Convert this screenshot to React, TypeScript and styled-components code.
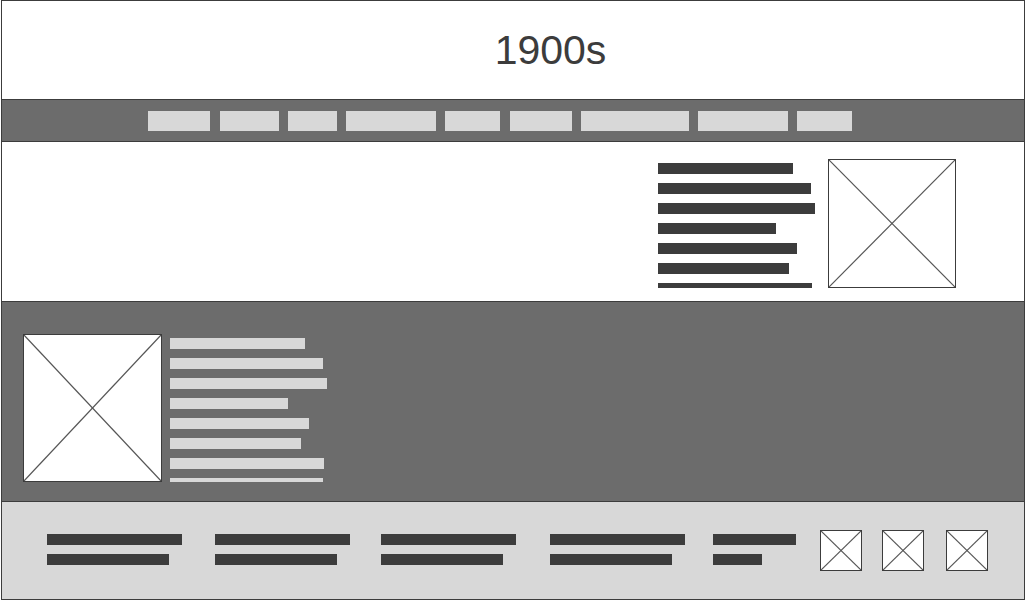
import React from "react";
import styled, { createGlobalStyle } from "styled-components";

const GlobalStyle = createGlobalStyle`
  html, body { margin: 0; padding: 0; background: #ffffff; }
  body { font-family: "Liberation Sans", Arial, sans-serif; }
  * { box-sizing: border-box; }
`;

const DARK = "#3c3c3c";
const MID = "#6c6c6c";
const LIGHT = "#d8d8d8";

const Page = styled.div`
  margin-left: 1px;
  width: 1024px;
  height: 600px;
  border: 1px solid ${DARK};
  display: flex;
  flex-direction: column;
  overflow: hidden;
`;

const Header = styled.header`
  height: 99px;
  border-bottom: 1px solid ${DARK};
  display: flex;
  align-items: center;
  justify-content: center;
  padding-left: 75px;
  padding-top: 1px;
  background: #ffffff;
`;

const Title = styled.h1`
  margin: 0;
  font-family: "Liberation Sans", Arial, sans-serif;
  font-weight: 400;
  font-size: 41px;
  color: ${DARK};
`;

const Nav = styled.nav`
  height: 42px;
  border-bottom: 1px solid ${DARK};
  background: ${MID};
  display: flex;
  align-items: flex-start;
  padding: 11px 0 0 146px;
`;

const NavItem = styled.div<{ $w: number; $ml: number }>`
  width: ${(p) => p.$w}px;
  height: 20px;
  margin-left: ${(p) => p.$ml}px;
  background: ${LIGHT};
  flex: none;
`;

const Hero = styled.section`
  height: 160px;
  border-bottom: 1px solid ${DARK};
  background: #ffffff;
  display: flex;
  align-items: flex-start;
  padding: 17px 0 0 656px;
  gap: 13px;
`;

const Feature = styled.section`
  height: 200px;
  border-bottom: 1px solid ${DARK};
  background: ${MID};
  display: flex;
  align-items: flex-start;
  padding: 32px 0 0 21px;
  gap: 8px;
`;

const TextBlock = styled.div<{ $h: number }>`
  width: 157px;
  height: ${(p) => p.$h}px;
  overflow: hidden;
  display: flex;
  flex-direction: column;
  flex: none;
`;

const Row = styled.div`
  height: 20px;
  padding-top: 4px;
  flex: none;
`;

const Bar = styled.div<{ $w: number; $c: string }>`
  width: ${(p) => p.$w}px;
  height: 11px;
  background: ${(p) => p.$c};
`;

const Frame = styled.div<{ $w: number; $h: number }>`
  width: ${(p) => p.$w}px;
  height: ${(p) => p.$h}px;
  border: 1px solid ${DARK};
  background: #ffffff;
  flex: none;
  display: block;
  svg { display: block; width: 100%; height: 100%; }
`;

const Footer = styled.footer`
  flex: 1;
  background: ${LIGHT};
  display: flex;
  align-items: flex-start;
  padding: 28px 0 0 45px;
`;

const FootCol = styled.div<{ $ml: number }>`
  margin-left: ${(p) => p.$ml}px;
  display: flex;
  flex-direction: column;
  flex: none;
`;

const FootIcon = styled.div<{ $ml: number }>`
  margin-left: ${(p) => p.$ml}px;
  flex: none;
`;

const Placeholder: React.FC<{ w: number; h: number }> = ({ w, h }) => (
  <Frame $w={w} $h={h}>
    <svg viewBox={`0 0 ${w - 2} ${h - 2}`} preserveAspectRatio="none">
      <line x1="0" y1="0" x2={w - 2} y2={h - 2} stroke="#555555" strokeWidth="1.2" />
      <line x1={w - 2} y1="0" x2="0" y2={h - 2} stroke="#555555" strokeWidth="1.2" />
    </svg>
  </Frame>
);

const navItems: [number, number][] = [
  [148, 62], [220, 59], [288, 49], [346, 90], [445, 55],
  [510, 62], [581, 108], [698, 90], [797, 55],
];

const lineWidths = [135, 153, 157, 118, 139, 131, 154, 153];

const footCols: { x: number; a: number; b: number }[] = [
  { x: 47, a: 135, b: 122 },
  { x: 215, a: 135, b: 122 },
  { x: 381, a: 135, b: 122 },
  { x: 550, a: 135, b: 122 },
  { x: 713, a: 83, b: 49 },
];

const icons = [820, 882, 946];

export default function App() {
  let prev = 148;
  let footPrev = 47;
  return (
    <>
      <GlobalStyle />
      <Page>
        <Header>
          <Title>1900s</Title>
        </Header>
        <Nav>
          {navItems.map(([x, w], i) => {
            const ml = i === 0 ? 0 : x - prev;
            prev = x + w;
            return <NavItem key={i} $w={w} $ml={ml} />;
          })}
        </Nav>
        <Hero>
          <TextBlock $h={129}>
            {lineWidths.map((w, i) => (
              <Row key={i}>
                <Bar $w={w} $c={DARK} />
              </Row>
            ))}
          </TextBlock>
          <Placeholder w={128} h={129} />
        </Hero>
        <Feature>
          <Placeholder w={139} h={148} />
          <TextBlock $h={148}>
            {lineWidths.map((w, i) => (
              <Row key={i}>
                <Bar $w={w} $c={LIGHT} />
              </Row>
            ))}
          </TextBlock>
        </Feature>
        <Footer>
          {footCols.map((c, i) => {
            const ml = i === 0 ? 0 : c.x - footPrev;
            footPrev = c.x + c.a;
            return (
              <FootCol key={i} $ml={ml}>
                <Row>
                  <Bar $w={c.a} $c={DARK} />
                </Row>
                <Row>
                  <Bar $w={c.b} $c={DARK} />
                </Row>
              </FootCol>
            );
          })}
          {icons.map((x, i) => {
            const ml = x - footPrev;
            footPrev = x + 42;
            return (
              <FootIcon key={i} $ml={ml}>
                <Placeholder w={42} h={41} />
              </FootIcon>
            );
          })}
        </Footer>
      </Page>
    </>
  );
}
